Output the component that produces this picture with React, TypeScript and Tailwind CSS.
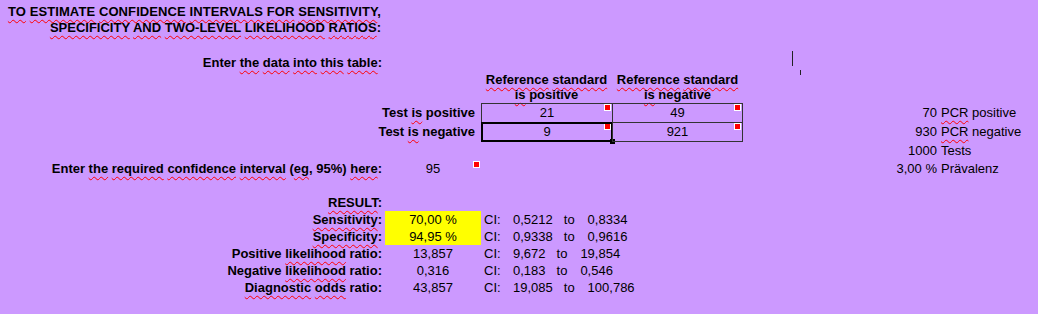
import React from "react";

// spell-check squiggle under a word, as the sheet shows it
function Sp({ children }: { children: React.ReactNode }) {
  return (
    <span className="underline decoration-wavy decoration-[#ff0000] decoration-1 underline-offset-[3px] [text-decoration-skip-ink:none]">
      {children}
    </span>
  );
}

function Note() {
  return <span className="absolute right-[1px] top-0 h-[7px] w-[7px] border border-white bg-[#ff0000]" />;
}

type Result = { label: React.ReactNode; value: string; lo: string; hi: string; hilite?: boolean };

const RESULTS: Result[] = [
  { label: <><Sp>Sensitivity</Sp>:</>, value: "70,00 %", lo: "0,5212", hi: "0,8334", hilite: true },
  { label: <><Sp>Specificity</Sp>:</>, value: "94,95 %", lo: "0,9338", hi: "0,9616", hilite: true },
  { label: <>Positive <Sp>likelihood</Sp> ratio:</>, value: "13,857", lo: "9,672", hi: "19,854" },
  { label: <>Negative <Sp>likelihood</Sp> ratio:</>, value: "0,316", lo: "0,183", hi: "0,546" },
  { label: <><Sp>Diagnostic</Sp> <Sp>odds</Sp> ratio:</>, value: "43,857", lo: "19,085", hi: "100,786" },
];

export default function App() {
  return (
    <div className="relative h-[314px] w-[1038px] overflow-hidden whitespace-nowrap bg-[#cc99ff] font-['Liberation_Sans',Arial,sans-serif] text-[13px] text-black">
      {/* title */}
      <div className="w-[385px] pr-[4px] pt-[4px] text-right font-bold leading-[16px]">
        <div className="tracking-[0.1px]">
          <Sp>TO</Sp> <Sp>ESTIMATE</Sp> <Sp>CONFIDENCE</Sp> <Sp>INTERVALS</Sp> <Sp>FOR</Sp> <Sp>SENSITIVITY</Sp>,
        </div>
        <div>
          <Sp>SPECIFICITY</Sp> <Sp>AND</Sp> <Sp>TWO-LEVEL</Sp> <Sp>LIKELIHOOD</Sp> <Sp>RATIOS</Sp>:
        </div>
      </div>

      <div className="mt-[18px] h-[17px] w-[385px] pr-[3px] text-right font-bold leading-[17px]">
        Enter <Sp>the</Sp> <Sp>data</Sp> <Sp>into</Sp> <Sp>this</Sp> <Sp>table</Sp>:
      </div>

      {/* column headers */}
      <div className="mt-[1px] flex font-bold leading-[15px]">
        <div className="w-[481px]" />
        <div className="w-[131px] text-center">
          <div><Sp>Reference</Sp> <Sp>standard</Sp></div>
          <div><Sp>is</Sp> positive</div>
        </div>
        <div className="w-[131px] text-center">
          <div><Sp>Reference</Sp> <Sp>standard</Sp></div>
          <div><Sp>is</Sp> negative</div>
        </div>
      </div>

      {/* 2x2 table */}
      <div className="mt-[1px] flex h-[19px] leading-[18px]">
        <div className="w-[481px] pr-[6px] pt-[1px] text-right font-bold">
          Test <Sp>is</Sp> positive
        </div>
        <div className="relative w-[131px] border-l border-t border-[#333] text-center">
          21
          <Note />
        </div>
        <div className="relative w-[131px] border-l border-r border-t border-[#333] text-center">
          49
          <Note />
        </div>
        <div className="w-[196px] pr-[2px] pt-[1px] text-right">70</div>
        <div className="pl-[2px] pt-[1px]">
          <Sp>PCR</Sp> positive
        </div>
      </div>
      <div className="flex h-[20px] leading-[18px]">
        <div className="w-[481px] pr-[6px] pt-[1px] text-right font-bold">
          Test <Sp>is</Sp> negative
        </div>
        <div className="relative w-[131px] border-b border-l border-t border-[#333] text-center">
          9
          <Note />
          <span className="absolute -left-[1px] -top-[1px] h-[20px] w-[132px] border-2 border-black" />
          <span className="absolute left-[128px] top-[16px] h-[5px] w-[5px] bg-black" />
        </div>
        <div className="relative w-[131px] border border-[#333] text-center">
          921
          <Note />
        </div>
        <div className="w-[196px] pr-[2px] pt-[1px] text-right">930</div>
        <div className="pl-[2px] pt-[1px]">
          <Sp>PCR</Sp> negative
        </div>
      </div>
      <div className="flex h-[18px] leading-[18px]">
        <div className="w-[743px]" />
        <div className="w-[196px] pr-[2px] text-right">1000</div>
        <div className="pl-[2px]">Tests</div>
      </div>

      {/* confidence level */}
      <div className="flex h-[17px] leading-[17px]">
        <div className="w-[385px] pr-[3px] text-right font-bold">
          Enter <Sp>the</Sp> <Sp>required</Sp> <Sp>confidence</Sp> <Sp>interval</Sp> (<Sp>eg</Sp>, 95%) <Sp>here</Sp>:
        </div>
        <div className="relative w-[96px] text-center">
          95
          <span className="absolute right-[1px] top-[1px] h-[7px] w-[7px] border border-white bg-[#ff0000]" />
        </div>
        <div className="w-[262px]" />
        <div className="w-[196px] pr-[2px] text-right">3,00 %</div>
        <div className="pl-[2px]">Prävalenz</div>
      </div>

      {/* results */}
      <div className="mt-[17px] h-[17px] w-[385px] pr-[3px] text-right font-bold leading-[17px]">
        <Sp>RESULT</Sp>:
      </div>
      {RESULTS.map((r) => (
        <div key={r.value} className="flex h-[17px] leading-[17px]">
          <div className="w-[385px] pr-[3px] text-right font-bold">{r.label}</div>
          <div className={"w-[96px] text-center " + (r.hilite ? "bg-[#ffff00]" : "")}>{r.value}</div>
          <div className="flex pl-[3px]">
            <span className="w-[29px]">CI:</span>
            <span>{r.lo}</span>
            <span className="ml-[11px]">to</span>
            <span className="ml-[13px]">{r.hi}</span>
          </div>
        </div>
      ))}

      {/* stray cursor marks */}
      <span className="absolute left-[792px] top-[51px] h-[15px] w-[1px] bg-[#222]" />
      <span className="absolute left-[800px] top-[70px] h-[5px] w-[1px] bg-[#222]" />
    </div>
  );
}
